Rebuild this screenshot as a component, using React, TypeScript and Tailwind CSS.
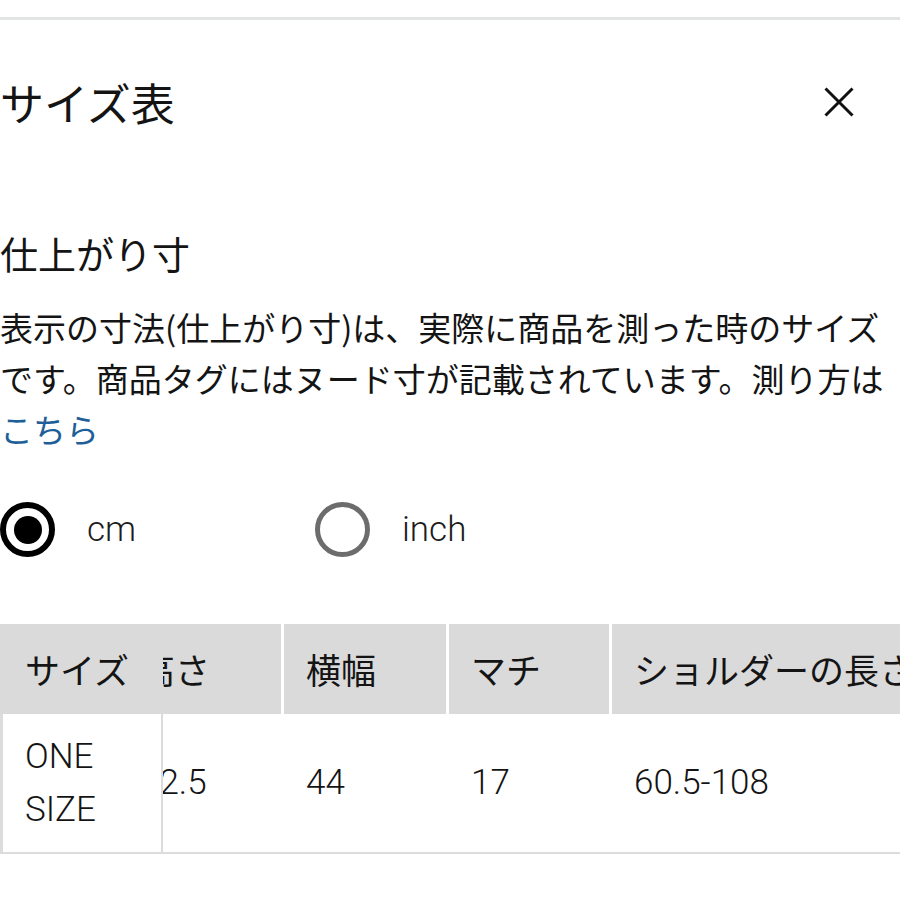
import React from 'react';

const jp = { fontFamily: '"Noto Sans CJK JP", sans-serif' };
const latin = { fontFamily: 'Roboto, "Noto Sans CJK JP", sans-serif' };

const columns = [
    { head: '高さ', value: '42.5', width: 'w-[166px]' },
    { head: '横幅', value: '44', width: 'w-[165px]' },
    { head: 'マチ', value: '17', width: 'w-[163px]' },
    { head: 'ショルダーの長さ', value: '60.5-108', width: 'w-[320px]' },
];

const Radio: React.FC<{ label: string; checked?: boolean }> = ({ label, checked }) => (
    <div className="flex items-center gap-[32px]">
        {checked ? (
            <div className="w-[55px] h-[55px] rounded-full border-[6px] border-black flex items-center justify-center">
                <div className="w-[28px] h-[28px] rounded-full bg-black" />
            </div>
        ) : (
            <div className="w-[55px] h-[55px] rounded-full border-[5px] border-[#6c6c6c]" />
        )}
        <span className="text-[35px] leading-none font-light text-[#1c1c1c]" style={latin}>{label}</span>
    </div>
);

export default function App() {
    return (
        <div className="w-[900px] h-[900px] bg-white overflow-hidden text-[#141414]" style={jp}>
            <div className="mt-[17px] h-[3px] bg-[#e3e5e5]" />

            <div className="mt-[52px] h-[60px] flex items-center justify-between pr-[46px]">
                <h1 className="text-[44px] leading-none font-normal">サイズ表</h1>
                <svg width="30" height="30" viewBox="0 0 30 30" stroke="#111" strokeWidth="3" fill="none">
                    <path d="M1.5 1.5 L28.5 28.5 M28.5 1.5 L1.5 28.5" />
                </svg>
            </div>

            <h2 className="mt-[96px] h-[50px] flex items-center text-[38px] leading-none font-normal">仕上がり寸</h2>

            <p className="mt-[24px] text-[33px] leading-[51px] whitespace-nowrap">
                表示の寸法(仕上がり寸)は、実際に商品を測った時のサイズ<br />
                です。商品タグにはヌード寸が記載されています。測り方は<br />
                <a className="text-[#1f5f99]">こちら</a>
            </p>

            <div className="mt-[47px] flex items-center">
                <div className="w-[315px]">
                    <Radio label="cm" checked />
                </div>
                <Radio label="inch" />
            </div>

            <div className="mt-[67px] flex">
                <div className="w-[163px] shrink-0">
                    <div className="h-[90px] bg-[#dadada] flex items-center pl-[25px] text-[35px]">サイズ</div>
                    <div className="h-[140px] border-l-[3px] border-r-2 border-b-2 border-[#dcdcdc] flex flex-col justify-center pl-[22px] text-[35px] leading-[53px] font-light" style={latin}>
                        <span>ONE</span>
                        <span>SIZE</span>
                    </div>
                </div>
                <div className="flex-1 overflow-hidden">
                    <div className="ml-[-45px] flex">
                        {columns.map((c) => (
                            <div key={c.head} className="shrink-0">
                                <div className={`h-[90px] ${c.width} bg-[#dadada] border-r-[3px] border-white flex items-center pl-[22px] text-[35px] whitespace-nowrap overflow-hidden`}>
                                    {c.head}
                                </div>
                                <div className="h-[140px] border-b-2 border-[#dcdcdc] flex items-center pl-[22px] text-[35px] font-light" style={latin}>
                                    {c.value}
                                </div>
                            </div>
                        ))}
                    </div>
                </div>
            </div>
        </div>
    );
}
